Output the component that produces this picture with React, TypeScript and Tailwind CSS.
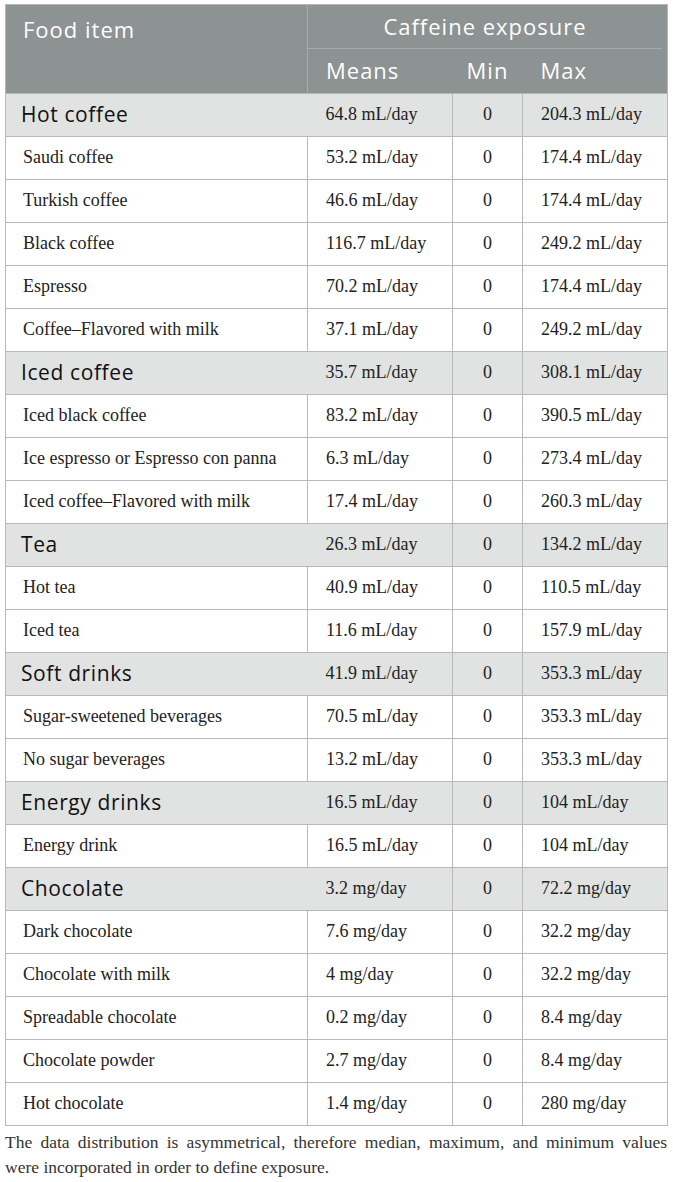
import React from "react";

type Row = { name: string; mean: string; max: string; cat?: boolean };

const rows: Row[] = [
  { name: "Hot coffee", mean: "64.8 mL/day", max: "204.3 mL/day", cat: true },
  { name: "Saudi coffee", mean: "53.2 mL/day", max: "174.4 mL/day" },
  { name: "Turkish coffee", mean: "46.6 mL/day", max: "174.4 mL/day" },
  { name: "Black coffee", mean: "116.7 mL/day", max: "249.2 mL/day" },
  { name: "Espresso", mean: "70.2 mL/day", max: "174.4 mL/day" },
  { name: "Coffee–Flavored with milk", mean: "37.1 mL/day", max: "249.2 mL/day" },
  { name: "Iced coffee", mean: "35.7 mL/day", max: "308.1 mL/day", cat: true },
  { name: "Iced black coffee", mean: "83.2 mL/day", max: "390.5 mL/day" },
  { name: "Ice espresso or Espresso con panna", mean: "6.3 mL/day", max: "273.4 mL/day" },
  { name: "Iced coffee–Flavored with milk", mean: "17.4 mL/day", max: "260.3 mL/day" },
  { name: "Tea", mean: "26.3 mL/day", max: "134.2 mL/day", cat: true },
  { name: "Hot tea", mean: "40.9 mL/day", max: "110.5 mL/day" },
  { name: "Iced tea", mean: "11.6 mL/day", max: "157.9 mL/day" },
  { name: "Soft drinks", mean: "41.9 mL/day", max: "353.3 mL/day", cat: true },
  { name: "Sugar-sweetened beverages", mean: "70.5 mL/day", max: "353.3 mL/day" },
  { name: "No sugar beverages", mean: "13.2 mL/day", max: "353.3 mL/day" },
  { name: "Energy drinks", mean: "16.5 mL/day", max: "104 mL/day", cat: true },
  { name: "Energy drink", mean: "16.5 mL/day", max: "104 mL/day" },
  { name: "Chocolate", mean: "3.2 mg/day", max: "72.2 mg/day", cat: true },
  { name: "Dark chocolate", mean: "7.6 mg/day", max: "32.2 mg/day" },
  { name: "Chocolate with milk", mean: "4 mg/day", max: "32.2 mg/day" },
  { name: "Spreadable chocolate", mean: "0.2 mg/day", max: "8.4 mg/day" },
  { name: "Chocolate powder", mean: "2.7 mg/day", max: "8.4 mg/day" },
  { name: "Hot chocolate", mean: "1.4 mg/day", max: "280 mg/day" },
];

const sans = "font-['Open_Sans',sans-serif]";
const serif = "font-['Liberation_Serif',serif]";
const head = `${sans} font-normal text-[22px] tracking-[1px]`;
const cell = `${serif} text-[18px] text-[#222]`;

export default function App() {
  return (
    <div className="bg-white w-[673px] pt-[4px] pl-[5px] pr-[6px]">
      <table className="w-[662px] table-fixed border-collapse border border-[#b8b8b8]">
        <colgroup>
          <col className="w-[302px]" />
          <col className="w-[145px]" />
          <col className="w-[70px]" />
          <col className="w-[145px]" />
        </colgroup>
        <thead>
          <tr className="bg-[#8d9293] text-white">
            <th
              rowSpan={2}
              className={`${head} align-top text-left leading-[28px] pt-[10px] pl-[17px] border-r border-[#a6abac]`}
            >
              Food item
            </th>
            <th colSpan={3} className="p-0 font-normal">
              <div
                className={`${head} mr-[5px] h-[44px] flex items-center justify-center border-b border-[#a6abac]`}
              >
                Caffeine exposure
              </div>
            </th>
          </tr>
          <tr className="bg-[#8d9293] text-white">
            <th className={`${head} h-[44px] text-left pl-[18px]`}>Means</th>
            <th className={`${head} h-[44px] text-center`}>Min</th>
            <th className={`${head} h-[44px] text-left pl-[18px]`}>Max</th>
          </tr>
        </thead>
        <tbody>
          {rows.map((r) =>
            r.cat ? (
              <tr key={r.name} className="bg-[#e1e2e2] h-[43px]">
                <td className={`${sans} text-[21px] tracking-[0.6px] text-[#111] pl-[15px] border-y border-[#b8b8b8]`}>
                  {r.name}
                </td>
                <td className={`${cell} pl-[18px] border-y border-[#b8b8b8]`}>{r.mean}</td>
                <td className={`${cell} text-center border border-[#b8b8b8]`}>0</td>
                <td className={`${cell} pl-[18px] border-y border-[#b8b8b8]`}>{r.max}</td>
              </tr>
            ) : (
              <tr key={r.name} className="bg-white h-[43px]">
                <td className={`${cell} pl-[17px] border border-[#b8b8b8]`}>{r.name}</td>
                <td className={`${cell} pl-[18px] border border-[#b8b8b8]`}>{r.mean}</td>
                <td className={`${cell} text-center border border-[#b8b8b8]`}>0</td>
                <td className={`${cell} pl-[18px] border border-[#b8b8b8]`}>{r.max}</td>
              </tr>
            )
          )}
        </tbody>
      </table>
      <div className={`${serif} text-[17.5px] leading-[25px] text-[#333] mt-[4px]`}>
        <p className="text-justify [text-align-last:justify]">
          The data distribution is asymmetrical, therefore median, maximum, and minimum values
        </p>
        <p>were incorporated in order to define exposure.</p>
      </div>
    </div>
  );
}
